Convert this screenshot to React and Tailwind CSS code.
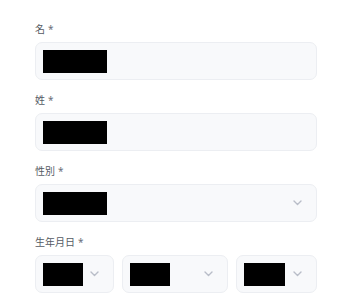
import React from 'react';

function Chevron() {
    return (
        <svg width="9" height="6" viewBox="0 0 9 6" fill="none" className="shrink-0">
            <path d="M1 1l3.5 3.5L8 1" stroke="#b9bdc8" strokeWidth="1.4" strokeLinecap="round" strokeLinejoin="round" />
        </svg>
    );
}

function Label({ text }) {
    return (
        <div className="text-[10px] leading-[12px] text-[#555a63] mb-[7px]">
            {text}<span className="ml-[3px] text-[#6b7079]">*</span>
        </div>
    );
}

function Box({ width, blackWidth, chevron, className = "" }) {
    return (
        <div
            className={`h-[38px] rounded-[7px] border border-[#eceef2] bg-[#f8f9fb] flex items-center pl-[7px] pr-[14px] ${className}`}
        >
            <div className={`h-[23px] bg-black ${blackWidth}`}></div>
            <div className="flex-1"></div>
            {chevron && <Chevron />}
        </div>
    );
}

export default function App() {
    return (
        <div
            className="w-[350px] h-[300px] bg-white overflow-hidden pt-[23px] pl-[35px]"
            style={{ fontFamily: '"Noto Sans", "Noto Sans CJK JP", sans-serif' }}
        >
            <div className="w-[282px]">
                <div className="mb-[14px]">
                    <Label text="名" />
                    <Box blackWidth="w-[64px]" />
                </div>
                <div className="mb-[14px]">
                    <Label text="姓" />
                    <Box blackWidth="w-[64px]" />
                </div>
                <div className="mb-[14px]">
                    <Label text="性別" />
                    <Box blackWidth="w-[64px]" chevron />
                </div>
                <div>
                    <Label text="生年月日" />
                    <div className="flex gap-[8px]">
                        <Box blackWidth="w-[40px]" chevron className="w-[79px] pr-[13px]" />
                        <Box blackWidth="w-[40px]" chevron className="w-[106px] pr-[13px]" />
                        <Box blackWidth="w-[41px]" chevron className="w-[81px] pr-[14px]" />
                    </div>
                </div>
            </div>
        </div>
    );
}
